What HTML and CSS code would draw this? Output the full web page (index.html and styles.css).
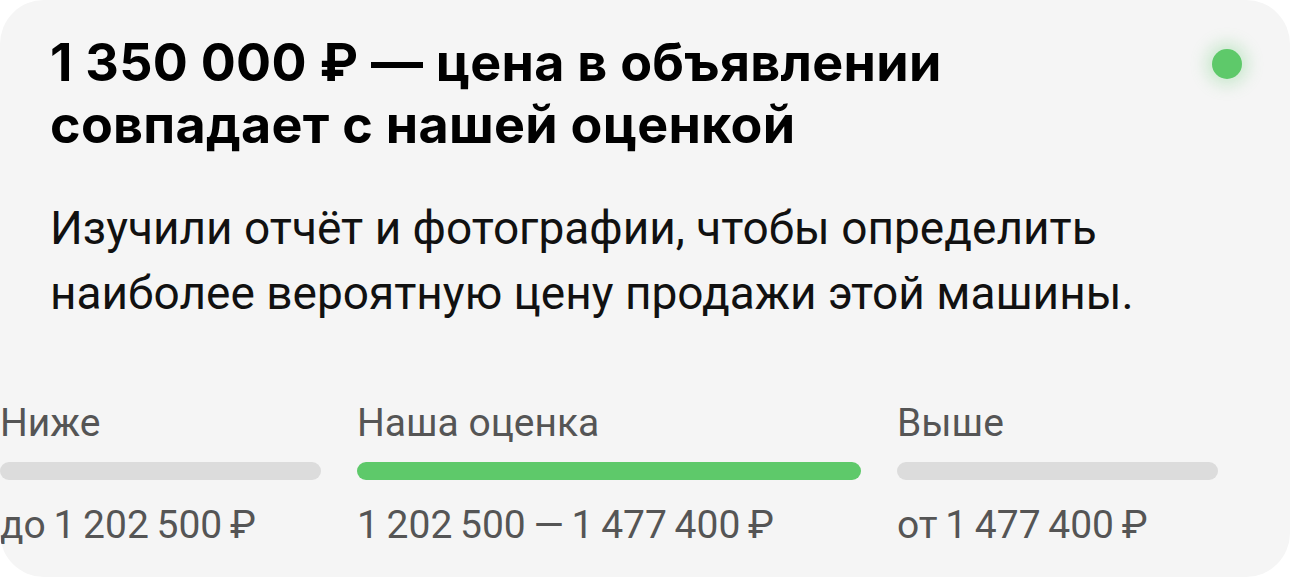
FILE: index.html
```html
<!DOCTYPE html>
<html lang="ru">
<head>
<meta charset="utf-8">
<title>Оценка цены</title>
<link rel="stylesheet" href="styles.css">
</head>
<body>
<section class="card">
  <div class="head">
    <h2 class="title">1 350 000 ₽ — цена в объявлении совпадает с нашей оценкой</h2>
    <span class="status"></span>
  </div>
  <p class="desc">Изучили отчёт и фотографии, чтобы определить наиболее вероятную цену продажи этой машины.</p>
  <div class="scale">
    <div class="seg seg-low">
      <div class="seg-label">Ниже</div>
      <div class="bar"></div>
      <div class="seg-value">до 1 202 500 ₽</div>
    </div>
    <div class="seg seg-mid">
      <div class="seg-label">Наша оценка</div>
      <div class="bar bar-active"></div>
      <div class="seg-value">1 202 500 — 1 477 400 ₽</div>
    </div>
    <div class="seg seg-high">
      <div class="seg-label">Выше</div>
      <div class="bar"></div>
      <div class="seg-value">от 1 477 400 ₽</div>
    </div>
  </div>
</section>
</body>
</html>
```

FILE: styles.css
```css
* { box-sizing: border-box; }

html, body {
  margin: 0;
  background: #ffffff;
}

.card {
  width: 1290px;
  height: 577px;
  background: #f5f5f5;
  border-radius: 44px;
  padding: 32px 48px 0 50px;
  overflow: hidden;
  font-family: Roboto, "Liberation Sans", sans-serif;
}

.head {
  display: flex;
  align-items: flex-start;
  justify-content: space-between;
}

.title {
  margin: 0;
  width: 1000px;
  font-family: Inter, "Noto Sans", sans-serif;
  font-weight: 700;
  font-size: 52px;
  line-height: 62px;
  letter-spacing: 0.3px;
  color: #000;
}

.status {
  flex: none;
  width: 30px;
  height: 30px;
  margin-top: 17px;
  border-radius: 50%;
  background: #5ec96a;
  box-shadow: 0 0 16px 6px rgba(94, 201, 106, 0.28);
}

.desc {
  margin: 40px 0 0;
  width: 1160px;
  font-size: 46px;
  line-height: 65px;
  color: #111;
}

.scale {
  display: grid;
  grid-template-columns: 321px 504px 321px;
  column-gap: 36px;
  margin: 75px 0 0 -50px;
}

.seg-label,
.seg-value {
  font-size: 39px;
  line-height: 44px;
  color: #555;
  white-space: nowrap;
}

.seg-value {
  word-spacing: -2px;
}

.bar {
  height: 18px;
  margin: 17px 0 23px;
  border-radius: 9px;
  background: #dcdcdc;
}

.bar-active {
  background: #5ec96a;
}
```
